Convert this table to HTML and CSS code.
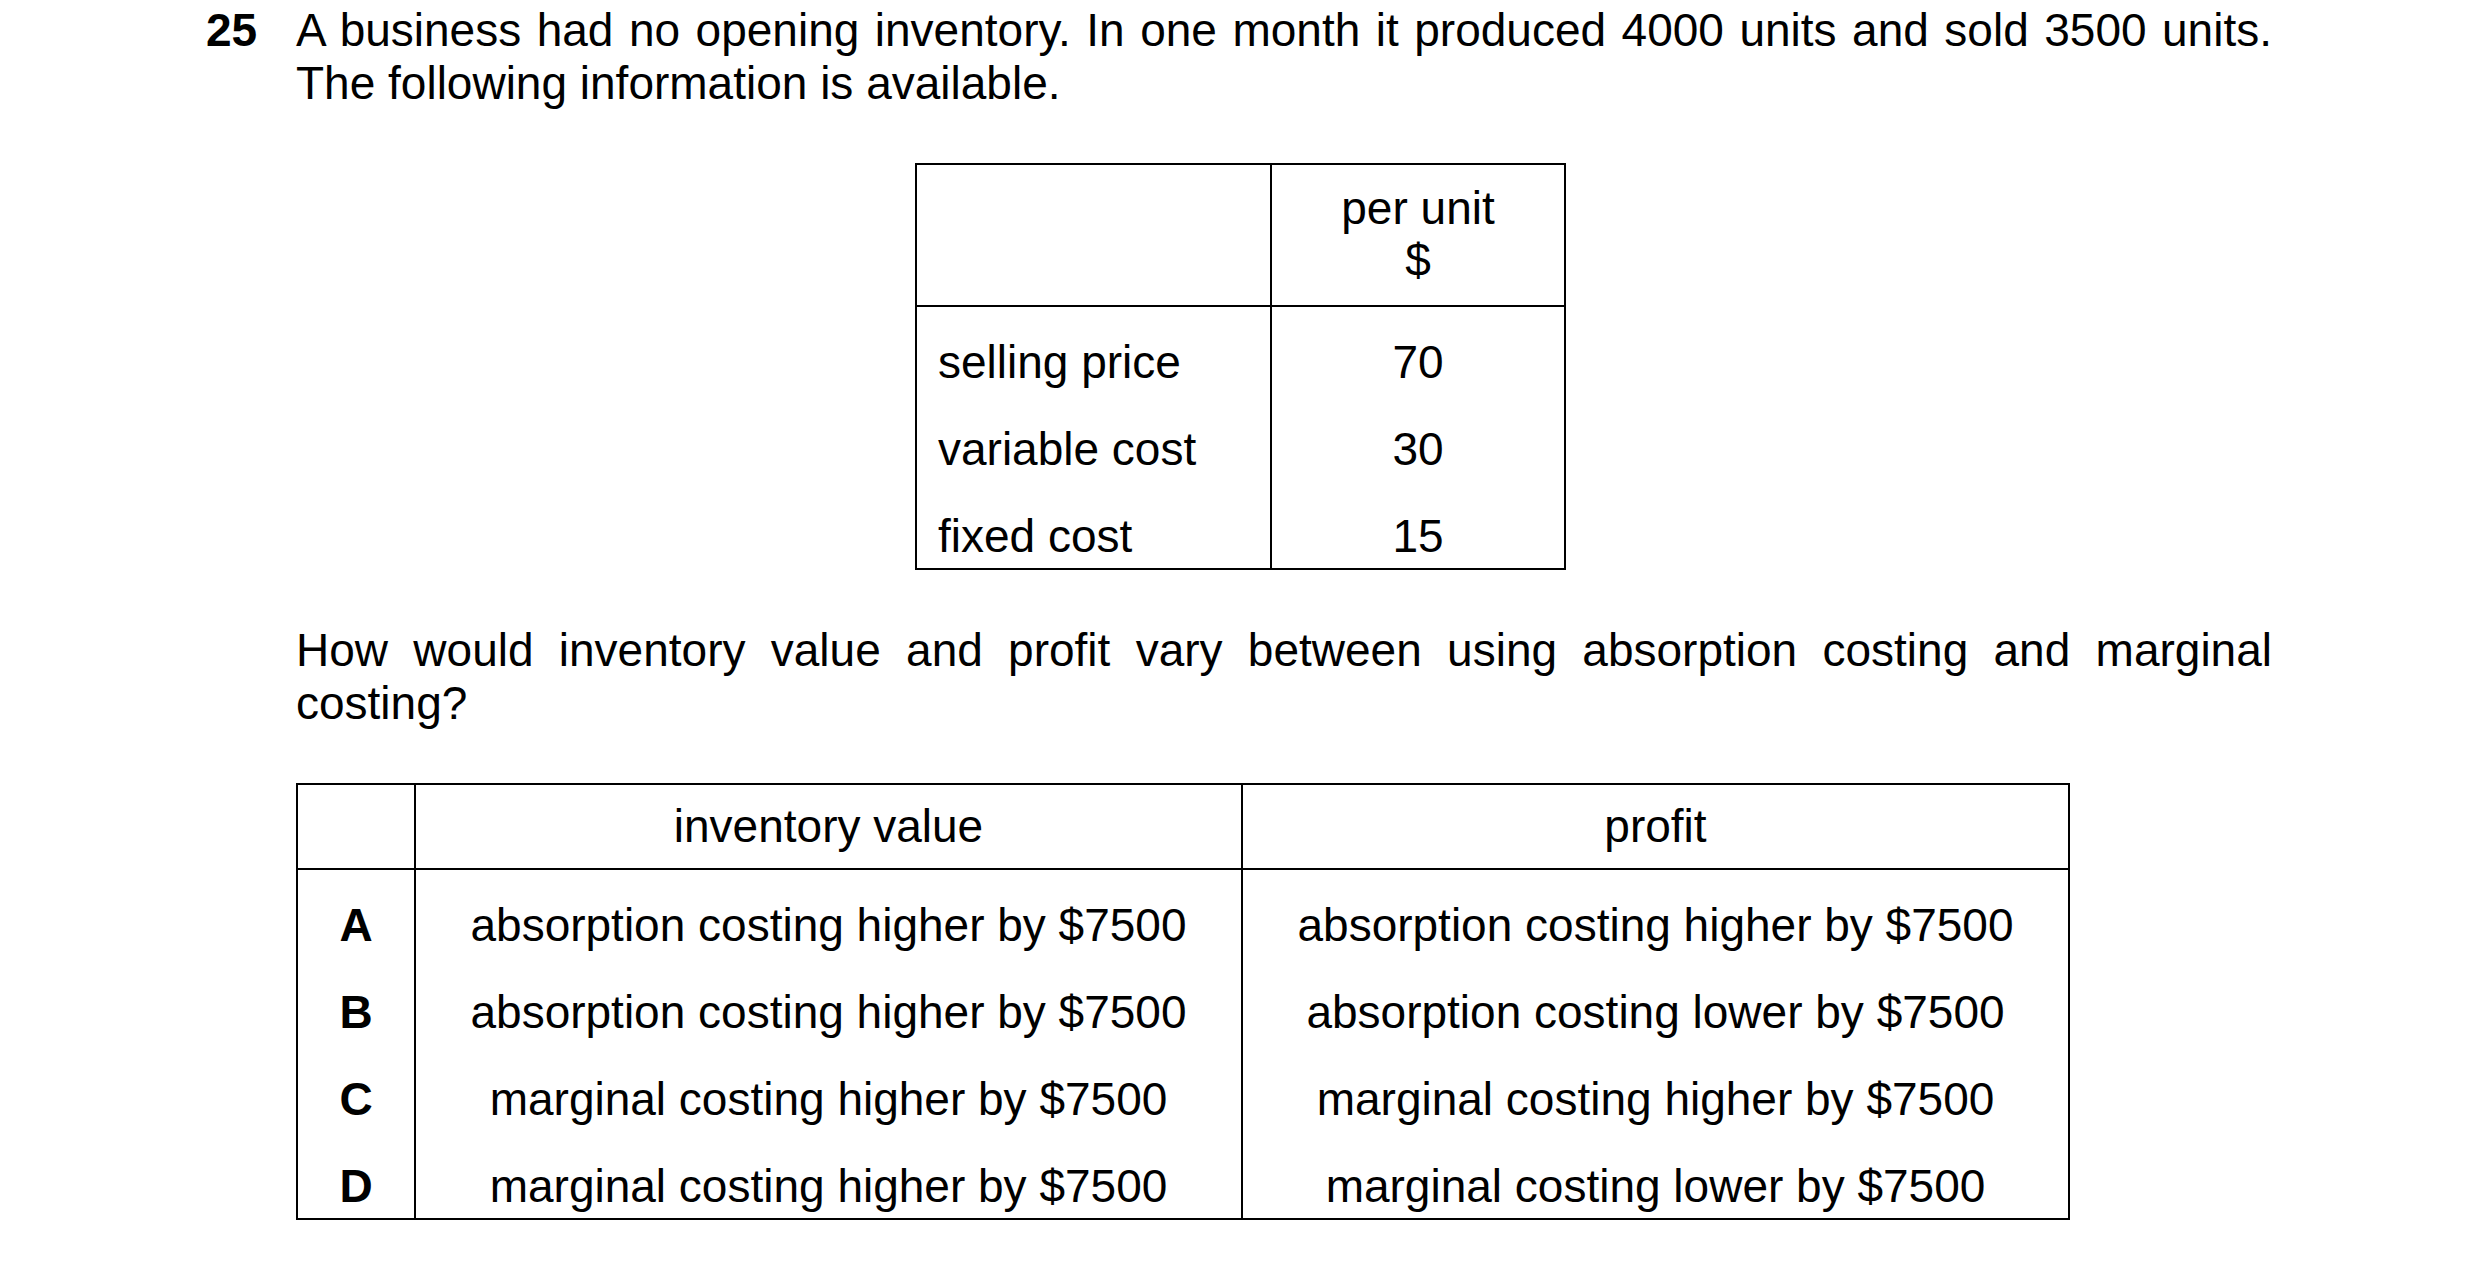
FILE: index.html
```html
<!DOCTYPE html>
<html lang="en">
<head>
<meta charset="utf-8">
<title>Question 25</title>
<link rel="stylesheet" href="styles.css">
</head>
<body>
<div class="q">
  <div class="num">25</div>
  <div class="content">
    <p class="intro">A business had no opening inventory. In one month it produced 4000 units and sold 3500 units. The following information is available.</p>
    <table class="info">
      <colgroup><col class="info-c1"><col class="info-c2"></colgroup>
      <thead>
        <tr><th></th><th>per unit<br>$</th></tr>
      </thead>
      <tbody>
        <tr><td class="label">selling price</td><td class="val">70</td></tr>
        <tr><td class="label">variable cost</td><td class="val">30</td></tr>
        <tr><td class="label">fixed cost</td><td class="val">15</td></tr>
      </tbody>
    </table>
    <p class="ask">How would inventory value and profit vary between using absorption costing and marginal costing?</p>
    <table class="opts">
      <colgroup><col class="opt-c1"><col class="opt-c2"><col class="opt-c3"></colgroup>
      <thead>
        <tr><th></th><th>inventory value</th><th>profit</th></tr>
      </thead>
      <tbody>
        <tr><td class="key">A</td><td>absorption costing higher by $7500</td><td>absorption costing higher by $7500</td></tr>
        <tr><td class="key">B</td><td>absorption costing higher by $7500</td><td>absorption costing lower by $7500</td></tr>
        <tr><td class="key">C</td><td>marginal costing higher by $7500</td><td>marginal costing higher by $7500</td></tr>
        <tr><td class="key">D</td><td>marginal costing higher by $7500</td><td>marginal costing lower by $7500</td></tr>
      </tbody>
    </table>
  </div>
</div>
</body>
</html>
```
FILE: styles.css
```css
html, body {
  margin: 0;
  background: #fff;
}
body {
  font-family: "Liberation Sans", Arial, sans-serif;
  font-size: 46px;
  color: #000;
}
.q {
  display: flex;
  padding: 4px 0 0 206px;
}
.num {
  width: 90px;
  flex: none;
  font-weight: bold;
  line-height: 53px;
}
.content {
  width: 1976px;
  flex: none;
}
.intro, .ask {
  margin: 0;
  line-height: 53px;
  text-align: justify;
}
.info {
  margin: 53px 0 54px 619px;
  border-collapse: collapse;
  table-layout: fixed;
  width: 649px;
  border: 2px solid #000;
}
.info-c1 { width: 355px; }
.info-c2 { width: 294px; }
.info th {
  font-weight: normal;
  padding: 17px 0 19px;
  line-height: 52px;
  text-align: center;
  border: 2px solid #000;
}
.info td {
  padding: 25px 0 2px;
  line-height: 60px;
  border-left: 2px solid #000;
  border-right: 2px solid #000;
  white-space: nowrap;
}
.info td.label {
  padding-left: 21px;
  text-align: left;
}
.info td.val {
  text-align: center;
}
.opts {
  margin: 53px 0 0 0;
  border-collapse: collapse;
  table-layout: fixed;
  width: 1772px;
  border: 2px solid #000;
}
.opt-c1 { width: 118px; }
.opt-c2 { width: 827px; }
.opt-c3 { width: 827px; }
.opts th {
  font-weight: normal;
  line-height: 83px;
  padding: 0;
  text-align: center;
  border: 2px solid #000;
}
.opts td {
  padding: 25px 0 2px;
  line-height: 60px;
  text-align: center;
  border-left: 2px solid #000;
  border-right: 2px solid #000;
  white-space: nowrap;
}
.opts td.key {
  font-weight: bold;
}
```
